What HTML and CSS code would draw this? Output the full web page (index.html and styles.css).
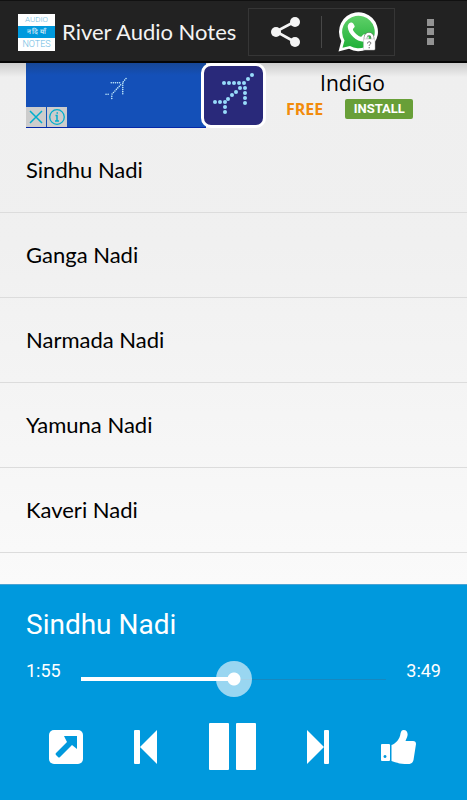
FILE: index.html
```html
<!DOCTYPE html>
<html lang="en">
<head>
<meta charset="utf-8">
<meta name="viewport" content="width=device-width, initial-scale=1">
<title>River Audio Notes</title>
<link rel="stylesheet" href="styles.css">
</head>
<body>
<header class="bar">
  <div class="logo"><span class="logo-top">AUDIO</span><span class="logo-mid" lang="hi">न दि याँ</span><span class="logo-bottom">NOTES</span></div>
  <h1 class="app-title">River Audio Notes</h1>
  <div class="share-group">
    <button class="bar-button" aria-label="Share">
      <svg width="30" height="32" viewBox="0 0 30 32"><path d="M25 5.500 6 15.500l19 10.500" fill="none" stroke="#f4f4f4" stroke-width="2.600"/><g fill="#f4f4f4"><circle cx="25" cy="6" r="5"/><circle cx="6" cy="16" r="5"/><circle cx="25" cy="26" r="5"/></g></svg>
    </button>
    <span class="divider"></span>
    <button class="bar-button" aria-label="Share on WhatsApp">
      <svg width="40" height="42" viewBox="0 0 40 42">
        <defs><linearGradient id="green" x1="0" y1="0" x2="0" y2="1"><stop offset="0" stop-color="#5fd069"/><stop offset="1" stop-color="#20b038"/></linearGradient></defs>
        <path d="M.500 40.500 3.300 30A19.500 19.500 0 1 1 11 37.800Z" fill="#fff"/>
        <path d="m4.500 36.800 2-7.300A16.300 16.300 0 1 1 12 35Z" fill="url(#green)"/>
        <path d="M13.600 11.500c-2.600 0-4 2.300-3.800 4.800.5 7.200 9.500 15 16.500 14.400 2.600-.3 4.700-2 4.500-4.500-.1-1-3.900-3-4.900-3-1 0-2 2.600-3 2.600-2.200 0-7.800-5.200-8-7.300-.1-.8 1.900-2 1.800-3 0-.8-1.600-4-3.100-4Z" fill="#fff"/>
        <path d="M27.500 29v-2.500a3.500 3.500 0 0 1 7 0V29" fill="none" stroke="#666" stroke-width="3.500"/>
        <path d="M27.500 29v-2.500a3.500 3.500 0 0 1 7 0V29" fill="none" stroke="#fff" stroke-width="2.500"/>
        <rect x="25.500" y="28" width="11.500" height="11" rx="1" fill="#fff" stroke="#bbb" stroke-width=".5"/>
        <path d="M29.500 32.500c0-2.500 4-2 3.200 0-.4 1-1.500 1-1.500 2.300M31.200 36v1.300" fill="none" stroke="#666" stroke-width="1"/>
      </svg>
    </button>
  </div>
  <button class="more" aria-label="More options"><svg width="8" height="28" viewBox="0 0 8 28" fill="#929292"><path d="M0 1h7v7H0zM0 10h7v7H0zM0 20h7v7H0z"/></svg></button>
</header>
<main class="content">
  <aside class="ad">
    <div class="ad-picture">
      <svg class="ad-plane" viewBox="0 0 44 44" aria-hidden="true"><path class="dots" d="M12 11h20M35 9l6-7M34 12v23M30 15 12 34M2 33h8M13 37v7"/></svg>
      <div class="ad-controls">
        <button class="ad-control" aria-label="Close ad"><svg width="20" height="20" viewBox="0 0 20 20"><path d="m4 4 12 12M16 4 4 16" stroke="#00aecd" stroke-width="1.500"/></svg></button>
        <button class="ad-control" aria-label="Ad information"><svg width="20" height="20" viewBox="0 0 20 20"><circle cx="10" cy="10" r="7.300" fill="none" stroke="#00aecd" stroke-width="1.300"/><path d="M8.500 8.500H10v5.500m-2 0h4M9.500 6h1.500" fill="none" stroke="#00aecd" stroke-width="1.500"/></svg></button>
      </div>
    </div>
    <div class="ad-icon">
      <svg width="58" height="58" viewBox="0 0 58 58" fill="#98dcfa"><circle cx="20" cy="17" r="2"/><circle cx="25" cy="17" r="2"/><circle cx="30" cy="17" r="2"/><circle cx="35" cy="17" r="2"/><circle cx="40" cy="17" r="2"/><circle cx="44" cy="13" r="2"/><circle cx="48" cy="9" r="2"/><circle cx="41" cy="22" r="2"/><circle cx="41" cy="27" r="2"/><circle cx="41" cy="32" r="2"/><circle cx="41" cy="37" r="2"/><circle cx="36" cy="22" r="2"/><circle cx="32" cy="26" r="2"/><circle cx="28" cy="29" r="2"/><circle cx="24" cy="33" r="2"/><circle cx="21" cy="36" r="2"/><circle cx="11" cy="36" r="2"/><circle cx="16" cy="36" r="2"/><circle cx="21" cy="41" r="2"/><circle cx="21" cy="46" r="2"/></svg>
    </div>
    <div class="ad-copy">
      <div class="ad-name">IndiGo</div>
      <div class="ad-offer"><span class="ad-price">FREE</span><button class="install">INSTALL</button></div>
    </div>
  </aside>
  <ul class="tracks">
    <li><a class="track" href="#sindhu">Sindhu Nadi</a></li>
    <li><a class="track" href="#ganga">Ganga Nadi</a></li>
    <li><a class="track" href="#narmada">Narmada Nadi</a></li>
    <li><a class="track" href="#yamuna">Yamuna Nadi</a></li>
    <li><a class="track" href="#kaveri">Kaveri Nadi</a></li>
  </ul>
</main>
<footer class="player">
  <h2 class="now">Sindhu Nadi</h2>
  <div class="progress">
    <span class="time">1:55</span>
    <input class="seek" type="range" min="0" max="229" value="115" aria-label="Seek">
    <span class="time">3:49</span>
  </div>
  <div class="controls">
    <button aria-label="Open"><svg width="34" height="34" viewBox="0 0 34 34"><rect width="34" height="34" rx="5" fill="#fff"/><path d="M15 6h13v13l-5-4L11 27q-1 1-2 0l-2-2q-1-1 0-2l11-11Z" fill="#0099dd"/></svg></button>
    <button aria-label="Previous"><svg width="24" height="34" viewBox="0 0 24 34" fill="#fff"><rect x="0" width="6" height="34" rx="1"/><path d="M23 0v34L6 17Z"/></svg></button>
    <button aria-label="Pause"><svg width="47" height="48" viewBox="0 0 47 48" fill="#fff"><rect width="20" height="47" rx="1"/><rect x="27" width="20" height="47" rx="1"/></svg></button>
    <button aria-label="Next"><svg width="23" height="34" viewBox="0 0 23 34" fill="#fff"><rect x="17" width="5" height="34" rx="1"/><path d="M0 0v34l17-17Z"/></svg></button>
    <button aria-label="Like"><svg width="35" height="34" viewBox="0 0 35 34" fill="#fff"><path fill-rule="evenodd" d="M1 14h7q1 0 1 1v15q0 1-1 1H1q-1 0-1-1V15q0-1 1-1Zm3 11a1.500 1.500 0 1 0 .01 0Z"/><path d="M10.500 15c4-1 8.500-6 9-11.500C20 1 21 0 22.500 0 26 0 27 3 26.500 5.500 26 8 25 9 24.500 11H32q3 0 3 3l-2.500 16q-.8 3.500-4 4c-7 .3-11-.5-18-3Z"/></svg></button>
  </div>
</footer>
</body>
</html>
```

FILE: styles.css
```css
* { box-sizing: border-box; }
body {
  margin: 0;
  min-height: 100vh;
  display: flex;
  flex-direction: column;
  font-family: Roboto, "Liberation Sans", sans-serif;
  color: #000;
}
button {
  padding: 0;
  border: 0;
  background: none;
  color: inherit;
  font: inherit;
}
svg { display: block; }
.bar {
  height: 63px;
  display: flex;
  align-items: center;
  padding: 2px 32px 0 18px;
  background: #222;
  border-top: 1px solid #111;
  border-bottom: 2px solid #050505;
}
.logo {
  width: 37px;
  height: 37px;
  display: grid;
  grid-template-rows: 12px 12px 13px;
  background: #fff;
  color: #69b9e2;
  text-align: center;
  font-size: 10px;
  line-height: 12px;
  font-weight: 300;
}
.logo-top { font-size: 8px; }
.logo-mid {
  background: #0099dd;
  color: #fff;
  font-size: 7px;
}
.logo-bottom { font-size: 9px; }
.app-title {
  flex: 1;
  margin: 0 0 0 7px;
  color: #f4f4f4;
  font: 400 22px/30px "Choco Cooky", Lato, sans-serif;
  white-space: nowrap;
}
.share-group {
  width: 147px;
  height: 48px;
  display: flex;
  align-items: center;
  border: 1px solid #363636;
}
.bar-button {
  flex: 1;
  display: flex;
  justify-content: center;
}
.divider {
  width: 1px;
  height: 32px;
  background: #484848;
}
.more { margin-left: 32px; }
.content {
  flex: 1;
  background: linear-gradient(#ccc, #efefef 14px, #f0f0f0 35%, #fafafa);
}
.ad {
  height: 65px;
  display: flex;
  margin: 0 26px;
}
.ad-picture {
  flex: 1;
  display: flex;
  align-items: flex-end;
  position: relative;
  margin-right: -5px;
  background: linear-gradient(#174796, #1450b8 12px);
  border-bottom: 1px solid #0528a8;
}
.ad-plane {
  position: absolute;
  left: 44%;
  top: 14px;
  width: 23px;
  height: 23px;
}
.dots {
  fill: none;
  stroke: #c5ecfc;
  stroke-width: 3;
  stroke-linecap: round;
  stroke-dasharray: 0 4;
}
.ad-controls {
  display: flex;
  gap: 1px;
}
.ad-control { background: #ccc; }
.ad-icon {
  position: relative;
  width: 65px;
  border: 3px solid #fff;
  border-radius: 10px;
  background: #29297a;
}
.ad-copy {
  width: 175px;
  padding: 5px 0 0 20px;
}
.ad-name {
  padding-right: 22px;
  font: 400 21px/30px "Open Sans", sans-serif;
  text-align: center;
}
.ad-offer {
  display: flex;
  align-items: center;
  gap: 22px;
}
.ad-price {
  color: #f28b0c;
  font: 700 16px/22px "Open Sans", sans-serif;
}
.install {
  width: 68px;
  height: 20px;
  border-radius: 2px;
  background: #689f38;
  color: #fff;
  font-size: 13px;
  line-height: 18px;
  font-weight: 700;
}
.tracks {
  margin: 0;
  padding: 0;
  list-style: none;
}
.track {
  height: 85px;
  display: flex;
  align-items: center;
  padding: 0 26px;
  border-bottom: 1px solid #dcdcdc;
  color: #000;
  font: 400 22px/30px "Choco Cooky", Lato, sans-serif;
  text-decoration: none;
}
.player {
  padding: 20px 26px 29px;
  background: #0099dd;
  border-top: 1px solid #4ba3d3;
  color: #fff;
}
.now {
  margin: 0;
  font-size: 28px;
  line-height: 40px;
  font-weight: 400;
}
.progress {
  display: flex;
  align-items: flex-start;
  justify-content: space-between;
  gap: 20px;
  margin-top: 14px;
}
.time {
  font-size: 18px;
  line-height: 24px;
}
.seek {
  flex: 1;
  min-width: 0;
  height: 40px;
  margin: 0;
  appearance: none;
  background:
    linear-gradient(#fff, #fff) left center / 50% 4px no-repeat,
    linear-gradient(#1688c0, #1688c0) center / 100% 1px no-repeat;
}
.seek::-webkit-slider-thumb {
  appearance: none;
  width: 36px;
  height: 36px;
  border-radius: 50%;
  background: radial-gradient(circle, #fff 6px, rgba(255, 255, 255, 0.6) 7px);
}
.controls {
  display: flex;
  align-items: center;
  justify-content: space-between;
  margin-top: 24px;
  padding: 0 25px 0 23px;
}
```
